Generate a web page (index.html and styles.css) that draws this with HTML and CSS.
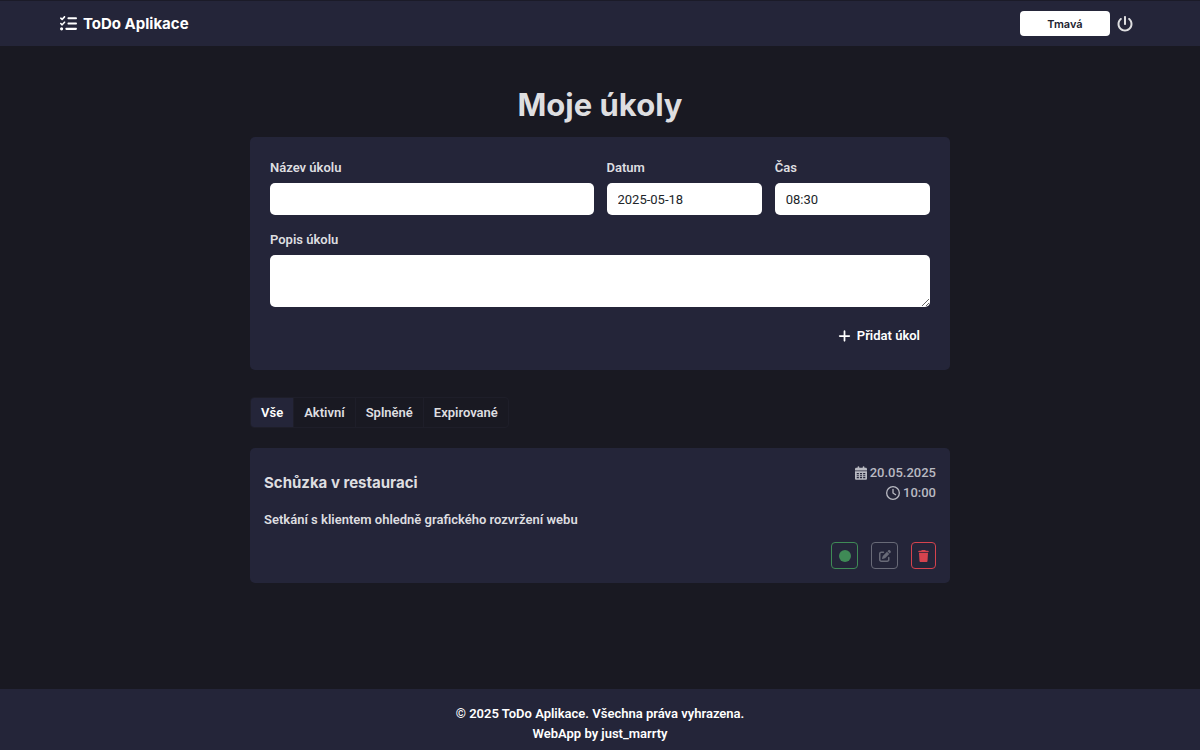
FILE: index.html
```html
<!DOCTYPE html>
<html lang="cs">
<head>
<meta charset="utf-8">
<meta name="viewport" content="width=device-width, initial-scale=1">
<title>ToDo Aplikace</title>
<link rel="stylesheet" href="styles.css">
</head>
<body>
<header class="navbar">
  <div class="navbar-inner">
    <a class="brand" href="#">
      <svg class="icon icon-brand" viewBox="0 0 512 512" aria-hidden="true"><path d="M152.100 38.200c9.900 8.900 10.700 24 1.800 33.900l-72 80c-4.400 4.900-10.600 7.800-17.200 7.900s-12.900-2.400-17.600-7L7 113C-2.300 103.600-2.300 88.400 7 79s24.600-9.400 33.900 0l22.100 22.100 55.100-61.200c8.900-9.900 24-10.700 33.900-1.800zm0 160c9.900 8.900 10.700 24 1.800 33.900l-72 80c-4.400 4.900-10.600 7.800-17.200 7.900s-12.900-2.400-17.600-7L7 273c-9.400-9.400-9.400-24.600 0-33.900s24.600-9.400 33.900 0l22.100 22.100 55.100-61.200c8.900-9.900 24-10.700 33.900-1.800zM224 96c0-17.700 14.300-32 32-32H480c17.700 0 32 14.300 32 32s-14.300 32-32 32H256c-17.700 0-32-14.300-32-32zm0 160c0-17.700 14.300-32 32-32H480c17.700 0 32 14.300 32 32s-14.300 32-32 32H256c-17.700 0-32-14.300-32-32zM160 416c0-17.700 14.300-32 32-32H480c17.700 0 32 14.300 32 32s-14.300 32-32 32H192c-17.700 0-32-14.300-32-32zM48 368a48 48 0 1 1 0 96 48 48 0 1 1 0-96z"/></svg>
      <span>ToDo Aplikace</span>
    </a>
    <div class="navbar-actions">
      <button class="theme-button" type="button">Tmavá</button>
      <button class="power-button" type="button" aria-label="Odhlásit se">
        <svg class="icon icon-power" viewBox="0 0 512 512" aria-hidden="true"><path d="M288 32c0-17.700-14.300-32-32-32s-32 14.300-32 32V256c0 17.700 14.300 32 32 32s32-14.300 32-32V32zM143.500 120.600c13.600-11.300 15.400-31.500 4.100-45.100s-31.500-15.400-45.100-4.100C49.700 115.400 16 181.800 16 256c0 132.500 107.500 240 240 240s240-107.500 240-240c0-74.200-33.800-140.600-86.600-184.600c-13.600-11.300-33.800-9.400-45.100 4.100s-9.400 33.800 4.100 45.100c38.900 32.300 63.500 81 63.500 135.400c0 97.200-78.800 176-176 176s-176-78.800-176-176c0-54.400 24.700-103.100 63.500-135.400z"/></svg>
      </button>
    </div>
  </div>
</header>

<main class="content">
  <h1 class="page-title">Moje úkoly</h1>

  <form class="panel task-form">
    <div class="form-row">
      <div class="field">
        <label class="label" for="name">Název úkolu</label>
        <input class="control" id="name" type="text">
      </div>
      <div class="field">
        <label class="label" for="date">Datum</label>
        <input class="control" id="date" type="text" value="2025-05-18">
      </div>
      <div class="field">
        <label class="label" for="time">Čas</label>
        <input class="control" id="time" type="text" value="08:30">
      </div>
    </div>
    <div class="field">
      <label class="label" for="description">Popis úkolu</label>
      <textarea class="control control-area" id="description"></textarea>
    </div>
    <div class="form-actions">
      <button class="add-button" type="submit">
        <svg class="icon icon-plus" viewBox="0 0 448 512" aria-hidden="true"><path d="M256 80c0-17.700-14.300-32-32-32s-32 14.300-32 32V224H48c-17.700 0-32 14.300-32 32s14.300 32 32 32H192V432c0 17.700 14.300 32 32 32s32-14.300 32-32V288H400c17.700 0 32-14.300 32-32s-14.300-32-32-32H256V80z"/></svg>
        <span>Přidat úkol</span>
      </button>
    </div>
  </form>

  <div class="filters">
    <button class="filter filter-active" type="button">Vše</button>
    <button class="filter" type="button">Aktivní</button>
    <button class="filter" type="button">Splněné</button>
    <button class="filter" type="button">Expirované</button>
  </div>

  <article class="panel task">
    <div class="task-main">
      <div class="task-text">
        <h2 class="task-title">Schůzka v restauraci</h2>
        <p class="task-description">Setkání s klientem ohledně grafického rozvržení webu</p>
      </div>
      <div class="task-meta">
        <div class="meta-line">
          <svg class="icon icon-calendar" viewBox="0 0 448 512" aria-hidden="true"><path d="M128 0c17.700 0 32 14.300 32 32V64H288V32c0-17.700 14.300-32 32-32s32 14.300 32 32V64h48c26.500 0 48 21.500 48 48v48H0V112C0 85.500 21.500 64 48 64H96V32c0-17.700 14.300-32 32-32zM0 192H448V464c0 26.500-21.500 48-48 48H48c-26.500 0-48-21.500-48-48V192zm64 64v48h80v-48zm120 0v48h80v-48zm120 0v48h80v-48zM64 336v40h80v-40zm120 0v40h80v-40zm120 0v40h80v-40zM64 408v48h80v-48zm120 0v48h80v-48zm120 0v48h80v-48z" fill-rule="evenodd"/></svg>
          <span>20.05.2025</span>
        </div>
        <div class="meta-line">
          <svg class="icon icon-clock" viewBox="0 0 512 512" aria-hidden="true"><path d="M464 256A208 208 0 1 1 48 256a208 208 0 1 1 416 0zM0 256a256 256 0 1 0 512 0A256 256 0 1 0 0 256zM232 120V256c0 8 4 15.500 10.700 20l96 64c11 7.400 25.900 4.400 33.300-6.700s4.400-25.900-6.700-33.300L280 243.200V120c0-13.300-10.700-24-24-24s-24 10.700-24 24z"/></svg>
          <span>10:00</span>
        </div>
      </div>
    </div>
    <div class="task-actions">
      <button class="action action-done" type="button" aria-label="Splnit">
        <svg class="icon icon-circle" viewBox="0 0 512 512" aria-hidden="true"><circle cx="256" cy="256" r="256"/></svg>
      </button>
      <button class="action action-edit" type="button" aria-label="Upravit">
        <svg class="icon icon-edit" viewBox="0 0 512 512" aria-hidden="true"><path d="M471.600 21.700c-21.900-21.900-57.300-21.900-79.200 0L362.300 51.700l97.900 97.900 30.100-30.100c21.900-21.900 21.900-57.300 0-79.200L471.600 21.700zm-299.200 220c-6.100 6.100-10.800 13.600-13.500 21.900l-29.600 88.800c-2.900 8.600-.6 18.100 5.800 24.600s15.900 8.700 24.600 5.800l88.800-29.600c8.200-2.700 15.700-7.400 21.900-13.500L437.700 172.300 339.700 74.300 172.400 241.700zM96 64C43 64 0 107 0 160V416c0 53 43 96 96 96H352c53 0 96-43 96-96V320c0-17.700-14.300-32-32-32s-32 14.300-32 32v96c0 17.700-14.300 32-32 32H96c-17.700 0-32-14.300-32-32V160c0-17.700 14.300-32 32-32h96c17.700 0 32-14.300 32-32s-14.300-32-32-32H96z"/></svg>
      </button>
      <button class="action action-delete" type="button" aria-label="Smazat">
        <svg class="icon icon-trash" viewBox="0 0 448 512" aria-hidden="true"><path d="M135.200 17.700L128 32H32C14.300 32 0 46.300 0 64S14.300 96 32 96H416c17.700 0 32-14.300 32-32s-14.300-32-32-32H320l-7.200-14.300C307.400 6.800 296.300 0 284.200 0H163.800c-12.100 0-23.200 6.800-28.600 17.700zM416 128H32L53.200 467c1.600 25.300 22.600 45 47.900 45H346.900c25.300 0 46.300-19.700 47.900-45L416 128z"/></svg>
      </button>
    </div>
  </article>
</main>

<footer class="footer">
  <p>© 2025 ToDo Aplikace. Všechna práva vyhrazena.</p>
  <p>WebApp by just_marrty</p>
</footer>
</body>
</html>
```

FILE: styles.css
```css
*,
*::before,
*::after {
  box-sizing: border-box;
}

body {
  margin: 0;
  min-height: 100vh;
  display: flex;
  flex-direction: column;
  background: #191922;
  color: #dedee0;
  font-family: Roboto, "Liberation Sans", sans-serif;
  font-size: 13px;
  font-weight: 600;
  line-height: 20px;
}

h1,
h2,
p {
  margin: 0;
}

button {
  font: inherit;
  color: inherit;
  cursor: pointer;
}

.icon {
  display: block;
  flex: none;
  fill: currentColor;
}

.navbar {
  background: #242539;
  border-top: 1px solid #1b1b28;
}

.navbar-inner {
  display: flex;
  align-items: center;
  justify-content: space-between;
  max-width: 1200px;
  height: 45px;
  margin: 0 auto;
  padding: 0 60px;
}

.brand {
  display: flex;
  align-items: center;
  gap: 6px;
  color: #fff;
  font-family: Inter, sans-serif;
  font-size: 15px;
  font-weight: 700;
  text-decoration: none;
}

.icon-brand {
  width: 17px;
  height: 17px;
}

.navbar-actions {
  display: flex;
  align-items: center;
}

.theme-button {
  width: 90px;
  height: 25px;
  padding: 0;
  border: 0;
  border-radius: 4px;
  background: #fff;
  color: #20212e;
  font-family: Inter, sans-serif;
  font-size: 11px;
  font-weight: 600;
}

.power-button {
  padding: 7px;
  border: 0;
  background: none;
}

.icon-power {
  width: 16px;
  height: 16px;
}

.content {
  flex: 1;
  width: 100%;
  max-width: 700px;
  margin: 0 auto;
  padding-top: 39px;
}

.page-title {
  margin-bottom: 12px;
  font-family: Inter, sans-serif;
  font-size: 31px;
  font-weight: 700;
  line-height: 40px;
  text-align: center;
}

.panel {
  border-radius: 5px;
  background: #242539;
}

.task-form {
  padding: 21px 20px 19px;
}

.form-row {
  display: grid;
  grid-template-columns: 323fr 155fr 155fr;
  gap: 13px;
  margin-bottom: 15px;
}

.label {
  display: block;
  margin-bottom: 5px;
}

.control {
  display: block;
  width: 100%;
  height: 32px;
  padding: 0 11px;
  border: 0;
  border-radius: 5px;
  background: #fff;
  color: #212529;
  font-family: Roboto, sans-serif;
  font-size: 13px;
}

.control-area {
  height: 52px;
  padding: 6px 11px;
  resize: vertical;
}

.form-actions {
  display: flex;
  justify-content: flex-end;
  padding-top: 14px;
}

.add-button {
  display: flex;
  align-items: center;
  gap: 6px;
  padding: 5px 10px;
  border: 0;
  background: none;
  color: #fff;
}

.icon-plus {
  width: 13px;
  height: 14px;
}

.filters {
  display: flex;
  width: fit-content;
  margin: 27px 0 20px;
  overflow: hidden;
  border: 1px solid #1e1e29;
  border-radius: 4px;
}

.filter {
  height: 29px;
  padding: 0 10px;
  border: 0;
  border-right: 1px solid #1e1e29;
  background: none;
}

.filter:last-child {
  border-right: 0;
}

.filter-active {
  background: #242539;
  color: #fff;
}

.task {
  padding: 15px 14px 14px;
}

.task-main {
  display: flex;
  justify-content: space-between;
}

.task-title {
  margin: 10px 0 17px;
  font-family: Inter, sans-serif;
  font-size: 15px;
  font-weight: 700;
}

.task-meta {
  display: flex;
  flex-direction: column;
  align-items: flex-end;
  color: #b9bac2;
  font-weight: 500;
}

.meta-line {
  display: flex;
  align-items: center;
  gap: 3px;
}

.icon-calendar {
  width: 12px;
  height: 14px;
}

.icon-clock {
  width: 14px;
  height: 14px;
}

.task-actions {
  display: flex;
  justify-content: flex-end;
  gap: 13px;
  margin-top: 12px;
}

.action {
  display: flex;
  align-items: center;
  justify-content: center;
  width: 27px;
  height: 27px;
  padding: 0;
  border: 1px solid;
  border-radius: 4px;
  background: none;
}

.action-done {
  color: #3f8a56;
}

.action-edit {
  color: #686a77;
}

.action-delete {
  width: 25px;
  color: #d5434e;
}

.icon-circle,
.icon-edit {
  width: 12px;
  height: 12px;
}

.icon-trash {
  width: 11px;
  height: 12px;
}

.footer {
  padding: 15px 20px 6px;
  background: #242539;
  color: #fff;
  text-align: center;
}
```
